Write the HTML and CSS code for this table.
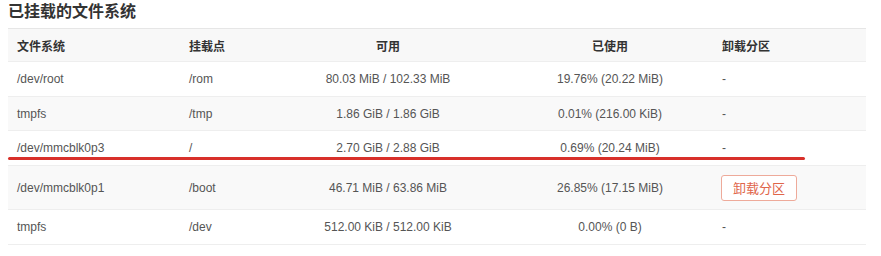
FILE: index.html
```html
<!DOCTYPE html>
<html lang="zh">
<head>
<meta charset="utf-8">
<link rel="stylesheet" href="styles.css">
</head>
<body>
<div class="wrap">
  <h3 class="title">已挂载的文件系统</h3>
  <table class="fs">
    <colgroup>
      <col class="c1"><col class="c2"><col class="c3"><col class="c4"><col class="c5">
    </colgroup>
    <thead>
      <tr><th>文件系统</th><th>挂载点</th><th class="ctr">可用</th><th class="ctr">已使用</th><th>卸载分区</th></tr>
    </thead>
    <tbody>
      <tr><td>/dev/root</td><td>/rom</td><td class="ctr">80.03 MiB / 102.33 MiB</td><td class="ctr">19.76% (20.22 MiB)</td><td>-</td></tr>
      <tr class="alt"><td>tmpfs</td><td>/tmp</td><td class="ctr">1.86 GiB / 1.86 GiB</td><td class="ctr">0.01% (216.00 KiB)</td><td>-</td></tr>
      <tr><td>/dev/mmcblk0p3</td><td>/</td><td class="ctr">2.70 GiB / 2.88 GiB</td><td class="ctr">0.69% (20.24 MiB)</td><td>-</td></tr>
      <tr class="alt tall"><td>/dev/mmcblk0p1</td><td>/boot</td><td class="ctr">46.71 MiB / 63.86 MiB</td><td class="ctr">26.85% (17.15 MiB)</td><td><button class="btn">卸载分区</button></td></tr>
      <tr><td>tmpfs</td><td>/dev</td><td class="ctr">512.00 KiB / 512.00 KiB</td><td class="ctr">0.00% (0 B)</td><td>-</td></tr>
    </tbody>
  </table>
  <div class="mark"></div>
</div>
</body>
</html>
```
FILE: styles.css
```css
html, body {
  margin: 0;
  padding: 0;
  background: #fff;
}
body {
  font-family: "Liberation Sans", Arial, "Noto Sans CJK SC", sans-serif;
  color: #555;
}
.wrap {
  position: relative;
  padding: 0 15px 0 8px;
}
.title {
  margin: 0 0 4px 0;
  font-size: 16px;
  line-height: 24px;
  font-weight: bold;
  color: #333;
}
.fs {
  width: 858px;
  border-collapse: collapse;
  table-layout: fixed;
  font-size: 12px;
}
.c1 { width: 172px; }
.c2 { width: 89px; }
.c3 { width: 238px; }
.c4 { width: 206px; }
.c5 { width: 153px; }
.fs th {
  background: #f8f8f8;
  color: #333;
  font-weight: bold;
  text-align: left;
  height: 32px;
  padding: 0 9px;
  border-top: 1px solid #e6e6e6;
  border-bottom: 1px solid #eee;
}
.fs td {
  height: 33.7px;
  padding: 0 9px;
  border-bottom: 1px solid #eee;
  text-align: left;
}
.fs .ctr { text-align: center; }
.fs tr.alt td { background: #f9f9f9; }
.fs tr.tall td { height: 43.3px; }
.btn {
  font-family: "Liberation Sans", Arial, "Noto Sans CJK SC", sans-serif;
  font-size: 13px;
  color: #e0654a;
  background: #fff;
  border: 1px solid #eeaa9a;
  border-radius: 3px;
  height: 26px;
  padding: 0 11px;
  margin-left: -1px;
}
.mark {
  position: absolute;
  left: 8px;
  top: 157px;
  width: 797px;
  height: 3px;
  border-radius: 2px;
  background: #d8302a;
}
```
